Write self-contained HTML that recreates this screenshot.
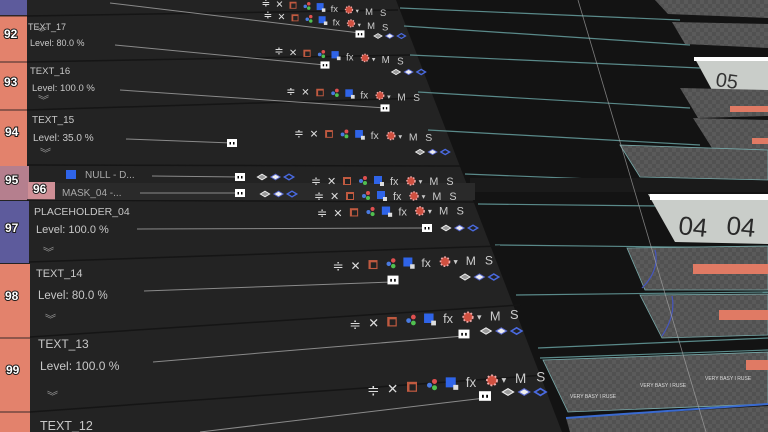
<!DOCTYPE html>
<html><head><meta charset="utf-8"><style>
html,body{margin:0;padding:0;background:#1f1f1f;width:768px;height:432px;overflow:hidden}
svg{display:block}
text{font-family:"Liberation Sans",sans-serif}
</style></head><body>
<svg id="s" width="768" height="432" viewBox="0 0 768 432" xmlns="http://www.w3.org/2000/svg">
<defs>
<pattern id="chk" width="8" height="8" patternUnits="userSpaceOnUse">
<rect width="8" height="8" fill="#5a5a5a"/><rect width="4" height="4" fill="#515151"/><rect x="4" y="4" width="4" height="4" fill="#515151"/>
</pattern>
</defs>
<rect width="768" height="432" fill="#232323"/>
<polygon points="396,0 768,0 768,432 562,432" fill="#131313"/>
<g stroke="#5a8a8a" stroke-width="1.2" fill="none">
<line x1="400" y1="8" x2="680" y2="20"/>
<line x1="404" y1="26" x2="690" y2="45"/>
<line x1="410" y1="55" x2="700" y2="68"/>
<line x1="418" y1="92" x2="690" y2="108"/>
<line x1="428" y1="130" x2="700" y2="145"/>
<line x1="465" y1="174" x2="768" y2="186"/>
<line x1="478" y1="204" x2="660" y2="206"/>
<line x1="495" y1="245" x2="768" y2="248"/>
<line x1="516" y1="295" x2="768" y2="292"/>
<line x1="538" y1="348" x2="768" y2="338"/>
<line x1="540" y1="358" x2="768" y2="350"/>
</g>
<rect x="470" y="178" width="298" height="14" fill="#1a1a1a"/>
<polygon points="655,0 768,0 768,18 668,14" fill="url(#chk)"/>
<polygon points="672,22 768,24 768,48 685,44" fill="url(#chk)"/>
<polygon points="694,57 768,60 768,92 712,90" fill="#c9cdc9"/>
<rect x="694" y="57" width="74" height="4" fill="#fff"/>
<text x="715" y="86" font-size="20" fill="#333" transform="rotate(8 715 86)">05</text>
<polygon points="680,88 768,90 768,116 698,118" fill="url(#chk)"/>
<rect x="730" y="106" width="38" height="6" fill="#e07a64"/>
<polygon points="693,118 768,120 768,150 712,148" fill="url(#chk)"/>
<rect x="752" y="138" width="16" height="6" fill="#e07a64"/>
<polygon points="620,145 768,150 768,180 640,177" fill="url(#chk)" stroke="#7aa" stroke-width="0.8"/>
<polygon points="648,194 768,196 768,244 675,242" fill="#c9cdc9"/>
<rect x="650" y="194" width="118" height="6" fill="#fff"/>
<text x="678" y="234" font-size="26" fill="#2a2a2a" transform="rotate(6 678 232)">04</text>
<text x="726" y="234" font-size="26" fill="#2a2a2a" transform="rotate(6 726 232)">04</text>
<polygon points="627,248 768,246 768,290 645,290" fill="url(#chk)" stroke="#7aa" stroke-width="0.8"/>
<rect x="693" y="264" width="75" height="10" fill="#e07a64"/>
<path d="M655,250 Q660,270 642,288" stroke="#4656c0" stroke-width="1.2" fill="none"/>
<polygon points="640,295 768,294 768,335 662,338" fill="url(#chk)" stroke="#7aa" stroke-width="0.8"/>
<rect x="719" y="310" width="49" height="10" fill="#e07a64"/>
<path d="M672,296 Q676,315 662,336" stroke="#4656c0" stroke-width="1.2" fill="none"/>
<polygon points="543,360 768,352 768,404 568,412" fill="url(#chk)" stroke="#7aa" stroke-width="0.8"/>
<rect x="746" y="360" width="22" height="10" fill="#e07a64"/>
<g font-size="5" fill="#ddd"><text x="570" y="398">VERY BASY I RUSE</text><text x="640" y="387">VERY BASY I RUSE</text><text x="705" y="380">VERY BASY I RUSE</text></g>
<polygon points="566,418 768,406 768,432 570,432" fill="url(#chk)"/>
<line x1="566" y1="418" x2="768" y2="404" stroke="#3a6ad0" stroke-width="2"/>
<line x1="578" y1="0" x2="706" y2="432" stroke="#aaa" stroke-width="0.8" opacity="0.7"/>
<rect x="0" y="0" width="27" height="15" fill="#5d5b9c"/>
<rect x="0" y="16" width="27" height="150" fill="#e3826c"/>
<rect x="0" y="166" width="29" height="34" fill="#b57f8e"/>
<rect x="28" y="182" width="27" height="18" fill="#cf8f96"/>
<rect x="0" y="201" width="29" height="62" fill="#5d5b9c"/>
<rect x="0" y="264" width="30" height="168" fill="#e3826c"/>
<g stroke="#3a2a2a" stroke-width="1">
<line x1="0" y1="16" x2="27" y2="16"/><line x1="0" y1="62" x2="27" y2="62"/><line x1="0" y1="110" x2="27" y2="110"/>
<line x1="0" y1="338" x2="30" y2="338"/><line x1="0" y1="412" x2="30" y2="412"/>
</g>
<g font-size="12" font-weight="bold" fill="#fff" stroke="#1a1a1a" stroke-width="2" paint-order="stroke">
<text x="4" y="38">92</text><text x="4" y="86">93</text><text x="5" y="136">94</text>
<text x="5" y="184">95</text><text x="33" y="193">96</text><text x="5" y="232">97</text>
<text x="5" y="300">98</text><text x="6" y="374">99</text>
</g>
<g stroke="#151515" stroke-width="1.5">
<line x1="27" y1="16" x2="398" y2="10"/><line x1="27" y1="62" x2="410" y2="55"/>
<line x1="27" y1="110" x2="420" y2="98"/><line x1="27" y1="165" x2="460" y2="166"/>
<line x1="27" y1="200" x2="478" y2="202"/><line x1="29" y1="262" x2="500" y2="246"/>
<line x1="30" y1="337" x2="520" y2="305"/><line x1="30" y1="412" x2="545" y2="375"/>
</g>
<rect x="55" y="183" width="420" height="17" fill="#2a2a2a"/>
<g fill="#c8c8c8">
<text x="28" y="30" font-size="9">TEXT_17</text>
<text x="30" y="46" font-size="9">Level:  80.0 %</text>
<text x="30" y="74" font-size="9.5">TEXT_16</text>
<text x="32" y="91" font-size="9.5">Level: 100.0 %</text>
<text x="32" y="123" font-size="10">TEXT_15</text>
<text x="33" y="141" font-size="10">Level:  35.0 %</text>
<text x="85" y="178" font-size="10" fill="#aaa">NULL - D...</text>
<text x="62" y="196" font-size="10" fill="#aaa">MASK_04 -...</text>
<text x="34" y="215" font-size="10.5">PLACEHOLDER_04</text>
<text x="36" y="233" font-size="11">Level: 100.0 %</text>
<text x="36" y="277" font-size="11">TEXT_14</text>
<text x="38" y="299" font-size="11.5">Level:  80.0 %</text>
<text x="38" y="348" font-size="12">TEXT_13</text>
<text x="40" y="370" font-size="12">Level: 100.0 %</text>
<text x="40" y="430" font-size="12.5">TEXT_12</text>
</g>
<g stroke="#8a8a8a" stroke-width="1">
<line x1="110" y1="3" x2="360" y2="33"/>
<line x1="115" y1="45" x2="325" y2="65"/>
<line x1="120" y1="90" x2="385" y2="108"/>
<line x1="126" y1="139" x2="232" y2="143"/>
<line x1="152" y1="176" x2="240" y2="177"/>
<line x1="140" y1="193" x2="240" y2="193"/>
<line x1="137" y1="229" x2="427" y2="228"/>
<line x1="144" y1="291" x2="393" y2="282"/>
<line x1="153" y1="362" x2="464" y2="336"/>
<line x1="200" y1="432" x2="485" y2="398"/>
</g>
<g id="dyn"></g>
</svg>
<script>
var NS="http://www.w3.org/2000/svg",g=document.getElementById('dyn');
function el(t,a,txt){var e=document.createElementNS(NS,t);for(var k in a)e.setAttribute(k,a[k]);if(txt)e.textContent=txt;g.appendChild(e);return e;}
function cluster(x,y,st,sl){
 var s=st/16,fs=9*s*1.2;
 function P(i){return [x+i*st,y+sl*i*st];}
 var p=P(0);el('text',{x:p[0]-4*s,y:p[1]+4*s,'font-size':fs*1.1,fill:'#ddd'},'≑');
 p=P(1);el('text',{x:p[0]-4*s,y:p[1]+4*s,'font-size':fs,fill:'#ddd'},'✕');
 p=P(2);el('rect',{x:p[0]-4*s,y:p[1]-4*s,width:8*s,height:8*s,fill:'#c05a40'});el('rect',{x:p[0]-2*s,y:p[1]-2*s,width:5*s,height:5*s,fill:'#222'});
 p=P(3);el('circle',{cx:p[0]+2*s,cy:p[1]-3*s,r:2*s,fill:'#e05050'});el('circle',{cx:p[0]-2*s,cy:p[1],r:2*s,fill:'#4a7ae0'});el('circle',{cx:p[0]+2*s,cy:p[1]+2*s,r:2*s,fill:'#50c050'});
 p=P(4);el('rect',{x:p[0]-5*s,y:p[1]-5*s,width:8*s,height:8*s,fill:'#2f64e8'});el('rect',{x:p[0]+1*s,y:p[1]+1*s,width:4*s,height:4*s,fill:'#ddd'});
 p=P(5);el('text',{x:p[0]-5*s,y:p[1]+4*s,'font-size':fs,fill:'#ccc'},'fx');
 p=P(6);el('circle',{cx:p[0],cy:p[1],r:4*s,fill:'#d05040',stroke:'#eaa',"stroke-width":1.5*s,"stroke-dasharray":1.5*s});
 p=P(6.6);el('text',{x:p[0]-2*s,y:p[1]+3*s,'font-size':fs*0.7,fill:'#ccc'},'▾');
 p=P(7.4);el('text',{x:p[0]-4*s,y:p[1]+4*s,'font-size':fs,fill:'#ccc'},'M');
 p=P(8.4);el('text',{x:p[0]-3*s,y:p[1]+4*s,'font-size':fs,fill:'#ccc'},'S');
}
function sec(x,y,st){var s=st/16;
 el('path',{d:'M'+(x-5*s)+','+y+' l'+5*s+','+(-3*s)+' l'+5*s+','+3*s+' l'+(-5*s)+','+3*s+'z',fill:'#999',stroke:'#eee','stroke-width':1*s});
 x+=st*0.9;el('path',{d:'M'+(x-5*s)+','+y+' l'+5*s+','+(-3*s)+' l'+5*s+','+3*s+' l'+(-5*s)+','+3*s+'z',fill:'#eee',stroke:'#5a6ad0','stroke-width':1*s});
 x+=st*0.9;el('path',{d:'M'+(x-5*s)+','+y+' l'+5*s+','+(-3*s)+' l'+5*s+','+3*s+' l'+(-5*s)+','+3*s+'z',fill:'#222',stroke:'#4a6ae0','stroke-width':1.5*s});
}
function handle(x,y,sz){el('rect',{x:x-sz/2,y:y-sz*0.4,width:sz,height:sz*0.8,fill:'#fff'});el('rect',{x:x-sz*0.25,y:y-sz*0.1,width:sz*0.15,height:sz*0.25,fill:'#000'});el('rect',{x:x+sz*0.1,y:y-sz*0.1,width:sz*0.15,height:sz*0.25,fill:'#000'});}
cluster(265,3,14,0.08);cluster(267,15,14,0.1);
cluster(278,51,14.5,0.08);cluster(290,91,15,0.05);cluster(298,133,15.5,0.03);
cluster(315,181,16,0.0);cluster(318,196,16,0.0);
cluster(321,213,16.5,-0.02);cluster(337,266,18,-0.04);cluster(354,324,19,-0.06);cluster(372,390,20,-0.08);
sec(378,36,13);sec(396,72,14);sec(420,152,14);sec(446,228,15);sec(465,277,16);sec(486,331,17);sec(508,392,18);
sec(262,177,15);sec(265,194,15);
handle(360,34,9);handle(325,65,9);handle(385,108,9);handle(232,143,10);handle(240,177,10);handle(240,193,10);
handle(427,228,10);handle(393,280,11);handle(464,334,11);handle(485,396,12);
el('rect',{x:66,y:170,width:10,height:9,fill:'#2f64e8'});
var cv=[[36,36],[38,104],[40,157],[43,256],[45,323],[47,400]];
cv.forEach(function(c){el('text',{x:c[0],y:c[1],'font-size':11,fill:'#999'},'︾');});
</script>
</body></html>
